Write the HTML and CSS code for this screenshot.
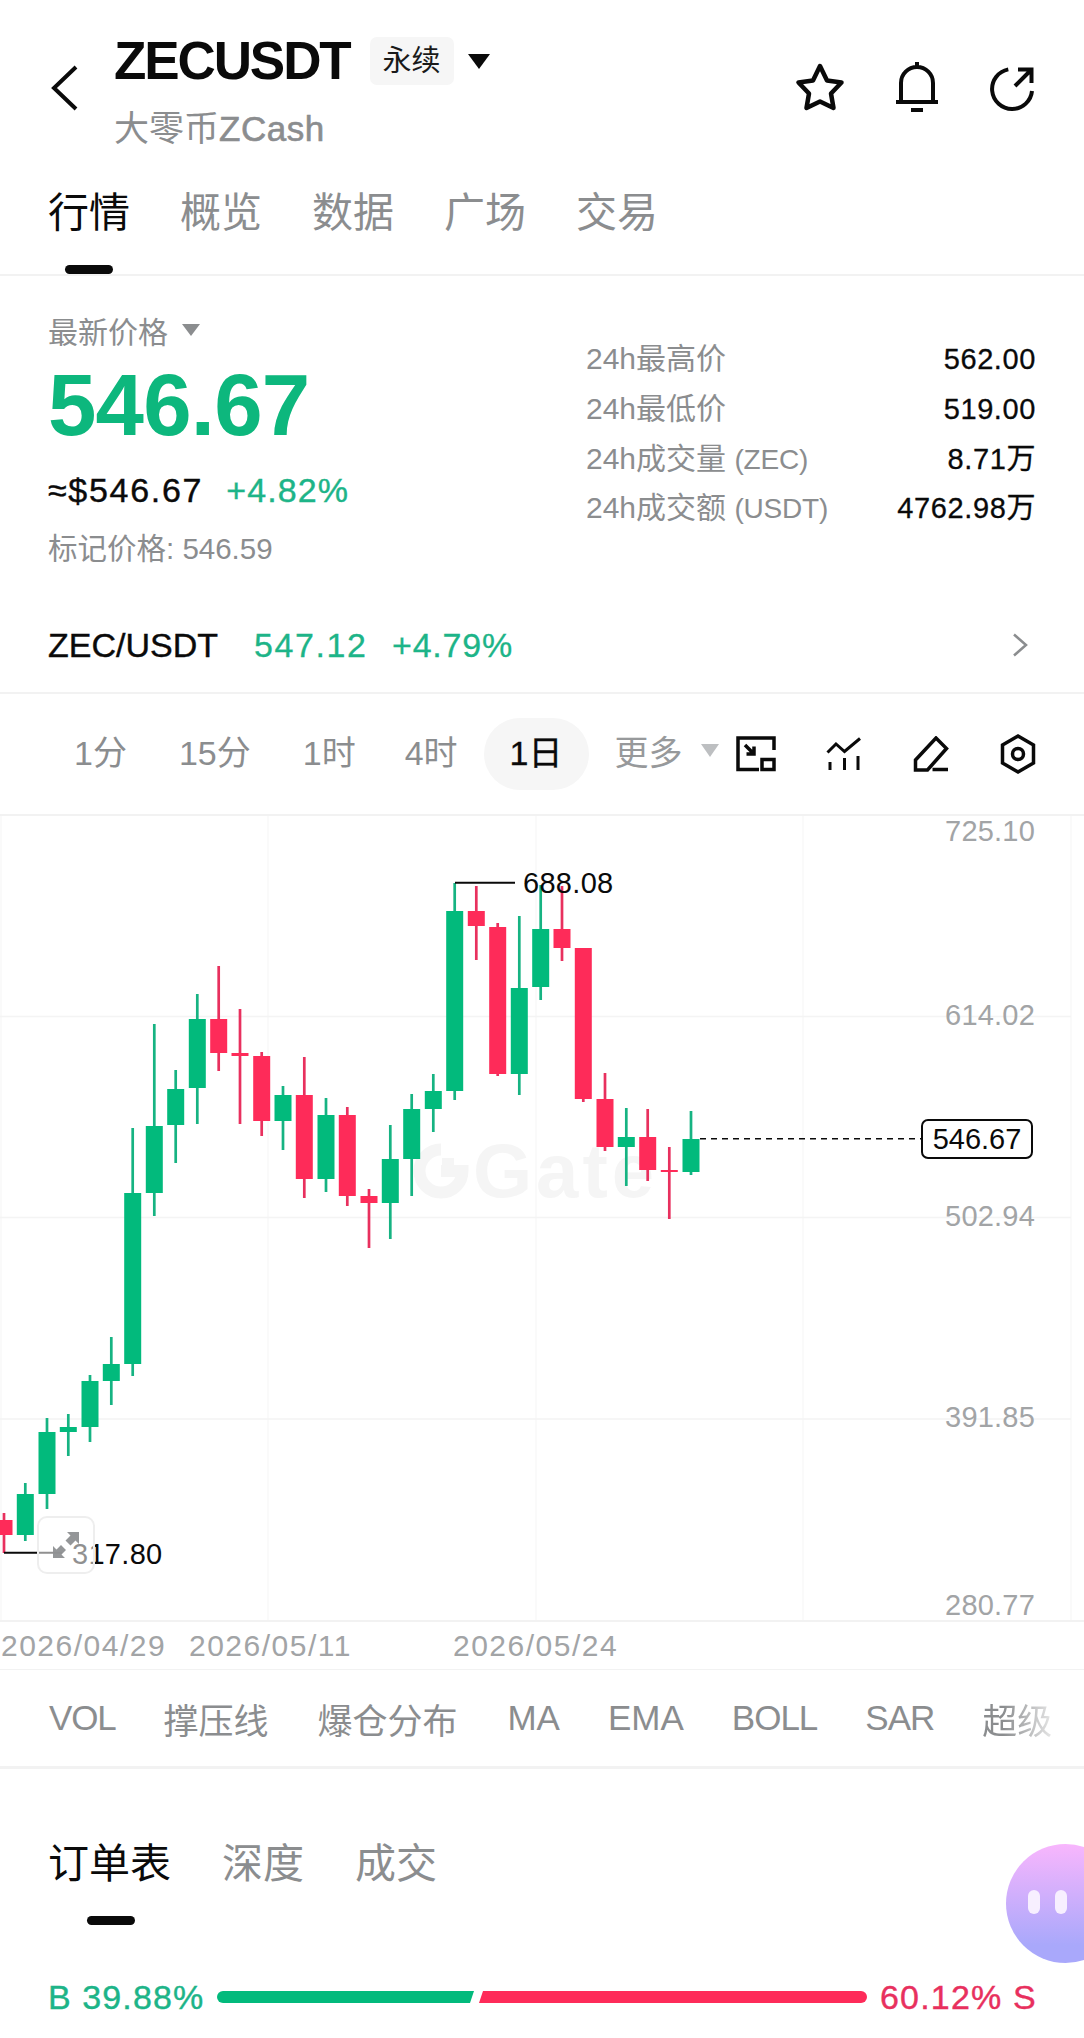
FILE: index.html
```html
<!DOCTYPE html>
<html lang="zh-CN">
<head>
<meta charset="utf-8">
<title>ZECUSDT</title>
<link rel="stylesheet" href="styles.css">
</head>
<body>
<div class="page">
  <header class="topbar">
    <svg class="back" viewBox="0 0 30 48"><path d="M26 3 4 24l22 21"/></svg>
    <div class="pair">
      <div class="title-row">
        <h1 class="title">ZECUSDT</h1>
        <span class="badge">永续</span>
        <i class="caret caret-dark"></i>
      </div>
      <div class="subtitle">大零币<span class="subtitle-latin">ZCash</span></div>
    </div>
    <div class="top-icons">
      <svg class="ic ic-star" viewBox="0 0 52 52"><path d="M26 5 33 19.500 47.500 21.500 37 32.500 39.500 47 26 40.500 12.500 47 15 32.500 4.500 21.500 19 19.500Z"/></svg>
      <svg class="ic ic-bell" viewBox="0 0 44 52"><path d="M6 41V22a16 16 0 0 1 32 0V41M22 1V6M1 41H43M16 49H28"/></svg>
      <svg class="ic ic-share" viewBox="0 0 48 48"><path d="M20.300 4.400A20 20 0 1 0 44 26M27 21 43.500 4.500M30 4.500H43.500V18"/></svg>
    </div>
  </header>

  <nav class="tabs main-tabs">
    <a class="tab active">行情<b class="bar-mark"></b></a>
    <a class="tab">概览</a>
    <a class="tab">数据</a>
    <a class="tab">广场</a>
    <a class="tab">交易</a>
  </nav>

  <section class="summary">
    <div class="summary-left">
      <div class="last-label">最新价格<i class="caret caret-gray"></i></div>
      <div class="last-price">546.67</div>
      <div class="fiat-row"><span class="fiat">≈$546.67</span><span class="pct">+4.82%</span></div>
      <div class="mark">标记价格: 546.59</div>
    </div>
    <dl class="stats">
      <div class="stat"><dt>24h最高价</dt><dd>562.00</dd></div>
      <div class="stat"><dt>24h最低价</dt><dd>519.00</dd></div>
      <div class="stat"><dt>24h成交量 <span class="unit">(ZEC)</span></dt><dd>8.71万</dd></div>
      <div class="stat"><dt>24h成交额 <span class="unit">(USDT)</span></dt><dd>4762.98万</dd></div>
    </dl>
  </section>

  <div class="spot">
    <span class="spot-name">ZEC/USDT</span>
    <span class="spot-price">547.12</span>
    <span class="spot-pct">+4.79%</span>
    <svg class="spot-chevron" viewBox="0 0 16 24"><path d="M2 1.500 14 12 2 22.500"/></svg>
  </div>

  <div class="toolbar">
    <a class="range">1分</a>
    <a class="range">15分</a>
    <a class="range range-tight">1时</a>
    <a class="range">4时</a>
    <a class="range selected">1日</a>
    <a class="range more">更多<i class="caret caret-fade"></i></a>
    <div class="tool-icons">
      <svg class="tool t-expand" viewBox="0 0 40 36"><path d="M23 33.500H2V2H38V14M26 23.500H38V33.500H26ZM9 9 18 18M18 10.500V18H10.500"/></svg>
      <svg class="tool t-ind" viewBox="0 0 36 36"><path d="M1.500 16.500 10 8 18.500 15.500 34 2.500M4 26V34M18.500 22V34M32 20V34"/></svg>
      <svg class="tool t-pen" viewBox="0 0 38 36"><path d="M4.500 34V24L25 2 35.500 12.500 16.500 34ZM21.500 33.500H37"/></svg>
      <svg class="tool t-hex" viewBox="0 0 38 42"><path d="M19 3 34.500 12V30L19 39 3.500 30V12Z"/><circle cx="19" cy="21" r="5.500"/></svg>
    </div>
  </div>

  <div class="chart">
    <div class="wm"><svg class="wm-logo" viewBox="0 0 56 56"><path d="M28 6.500A21.500 21.500 0 1 0 49.500 28H28"/><rect x="29" y="15" width="12" height="12"/></svg><span class="wm-text">Gate</span></div>
    <svg class="plot" viewBox="0 816 1084 804">
      <path class="grid-v" d="M1 816V1620M268 816V1620M536 816V1620M803 816V1620M1071 816V1620"/>
      <path class="grid-h" d="M0 1016.500H1071M0 1217.500H1071M0 1419H1071"/>
      <path class="wick up" d="M25.300 1483V1541M47 1418V1509M68.300 1414V1456M90 1375V1442M111.300 1337V1405M132.700 1128V1376M154.300 1024V1216M175.700 1070V1163M197.300 994V1124M283 1086V1150M326 1098V1192M390.300 1125V1239M411.700 1094V1196M433.300 1074V1132M454.700 883V1100M519.300 916V1095M540.700 885V1000M626.300 1108V1186M691 1111V1175"/>
      <path class="wick down" d="M4 1513V1553M218.700 966V1071M240 1009V1124M261.700 1052V1136M304.300 1057V1198M347.300 1107V1206M369 1189V1248M476.300 886V960M497.700 923V1076M562 886V961M583.300 948V1102M605 1073V1151M647.700 1109V1181M669.300 1147V1219"/>
      <path class="body up" d="M16.800 1494h17v41h-17zM38.500 1432h17v62h-17zM59.800 1427h17v5h-17zM81.500 1381h17v46h-17zM102.800 1364h17v17h-17zM124.200 1193h17v171h-17zM145.800 1126h17v67h-17zM167.200 1089h17v36h-17zM188.800 1019h17v69h-17zM274.500 1095h17v26h-17zM317.500 1115h17v64h-17zM381.800 1159h17v44h-17zM403.200 1109h17v50h-17zM424.800 1091h17v18h-17zM446.200 911h17v180h-17zM510.800 988h17v86h-17zM532.200 929h17v58h-17zM617.800 1137h17v10h-17zM682.500 1139h17v33h-17z"/>
      <path class="body down" d="M-4.500 1520h17v15h-17zM210.200 1019h17v34h-17zM231.500 1053h17v3h-17zM253.200 1056h17v65h-17zM295.800 1095h17v84h-17zM338.800 1115h17v81h-17zM360.500 1196h17v7h-17zM467.800 911h17v15h-17zM489.200 927h17v147h-17zM553.500 929h17v19h-17zM574.800 948h17v151h-17zM596.500 1099h17v48h-17zM639.200 1137h17v33h-17zM660.800 1170h17v2h-17z"/>
      <path class="guide" d="M455 882.700H515M4 1552.700H62"/>
      <path class="dash" d="M700 1138.700H921"/>
    </svg>
    <span class="axis a1">725.10</span>
    <span class="axis a2">614.02</span>
    <span class="axis a3">502.94</span>
    <span class="axis a4">391.85</span>
    <span class="axis a5">280.77</span>
    <span class="note note-high">688.08</span>
    <span class="note note-low">317.80</span>
    <span class="tag">546.67</span>
    <div class="fit"><svg class="fit-ic" viewBox="0 0 30 30"><path d="M16 2H28V14L24.500 10.500 19.500 15.500 14.500 10.500 19.500 5.500ZM14 28H2V16L5.500 19.500 10 15 15 20 10.500 24.500Z"/></svg></div>
  </div>

  <div class="dates">
    <span class="date d1">2026/04/29</span>
    <span class="date d2">2026/05/11</span>
    <span class="date d3">2026/05/24</span>
  </div>

  <div class="indicators">
    <a class="ind-vol">VOL</a><a>撑压线</a><a class="ind-liq">爆仓分布</a><a class="ind-ma">MA</a><a>EMA</a><a class="ind-boll">BOLL</a><a class="ind-sar">SAR</a><a class="fade-out">超级</a>
  </div>

  <nav class="tabs book-tabs">
    <a class="tab active">订单表<b class="bar-mark"></b></a>
    <a class="tab">深度</a>
    <a class="tab">成交</a>
  </nav>

  <div class="ratio">
    <span class="ratio-b">B 39.88%</span>
    <div class="ratio-bar"><i class="seg-b"></i><i class="seg-s"></i></div>
    <span class="ratio-s">60.12% S</span>
  </div>

  <div class="mascot"><i></i><i></i></div>
</div>
</body>
</html>
```
FILE: styles.css
```css
* { box-sizing: border-box; }
html, body { margin: 0; padding: 0; background: #fff; }
body {
  width: 1084px;
  height: 2038px;
  overflow: hidden;
  font-family: "Liberation Sans", "Noto Sans CJK SC", sans-serif;
  color: #0a0a0a;
}
.page { position: relative; width: 1084px; height: 2038px; overflow: hidden; }
a { display: block; }
i { display: block; font-style: normal; }

.caret { width: 0; height: 0; border-style: solid; border-color: transparent; border-bottom-width: 0; }
.caret-dark { margin-left: 14px; border-width: 15px 11px 0; border-top-color: #0a0a0a; }
.caret-gray { margin-left: 14px; border-width: 12px 9px 0; border-top-color: #8b8d8f; }
.caret-fade { margin-left: 18px; border-width: 13px 9px 0; border-top-color: #bdbfc1; }

/* header */
.topbar { display: flex; height: 165px; padding: 0 48px 0 50px; }
.back { width: 30px; height: 48px; margin: 64px 34px 0 0; flex: none; fill: none; stroke: #0a0a0a; stroke-width: 4; }
.pair { padding-top: 31px; }
.title-row { display: flex; align-items: center; height: 60px; }
.title { margin: 0 20px 0 0; font-size: 53px; line-height: 60px; font-weight: 700; letter-spacing: -2.100px; }
.badge { width: 84px; height: 48px; background: #f6f6f6; border-radius: 7px; font-size: 29px; line-height: 48px; text-align: center; color: #1a1a1a; }
.subtitle { margin-top: 17px; font-size: 35px; line-height: 42px; color: #8b8d8f; }
.subtitle-latin { -webkit-text-stroke: 0.600px #8b8d8f; letter-spacing: 0.500px; }
.top-icons { margin-left: auto; display: flex; align-items: flex-start; padding-top: 61px; }
.ic { flex: none; fill: none; stroke: #0a0a0a; stroke-width: 4.500; stroke-linejoin: round; }
.ic-star { width: 52px; height: 52px; margin-right: 49px; }
.ic-bell { width: 44px; height: 52px; margin-right: 49px; stroke-width: 4; stroke-linejoin: miter; }
.ic-share { width: 48px; height: 48px; margin-top: 4px; stroke-width: 4; stroke-linejoin: miter; }

/* tabs */
.tabs { display: flex; padding-left: 48px; }
.main-tabs { gap: 50px; height: 111px; border-bottom: 2px solid #f2f2f2; padding-top: 24px; }
.book-tabs { gap: 51px; height: 156px; padding-top: 71px; }
.tab { position: relative; font-size: 41px; line-height: 48px; color: #8b8d8f; }
.tab.active { color: #0a0a0a; }
.bar-mark { display: block; width: 48px; height: 9px; margin: 28px auto 0; border-radius: 5px; background: #0a0a0a; }
.book-tabs .bar-mark { margin-left: 39px; }

/* summary */
.summary { display: flex; justify-content: space-between; height: 322px; padding: 0 48px 0 48px; }
.summary-left { padding-top: 34px; }
.last-label { display: flex; align-items: center; height: 40px; font-size: 30px; color: #8b8d8f; }
.last-price { margin-top: 5px; font-size: 87px; line-height: 100px; font-weight: 700; letter-spacing: -0.800px; color: #0db77d; }
.fiat-row { display: flex; margin-top: 15px; font-size: 34px; line-height: 40px; letter-spacing: 1.700px; }
.fiat { margin-right: 23px; -webkit-text-stroke: 0.400px #0a0a0a; }
.pct { color: #1db488; letter-spacing: 1.100px; -webkit-text-stroke: 0.400px #1db488; }
.mark { margin-top: 19px; font-size: 29.500px; line-height: 40px; color: #8b8d8f; }
.stats { margin: 0; padding-top: 58px; width: 449px; }
.stat { display: flex; justify-content: space-between; height: 49.800px; line-height: 50px; font-size: 30px; }
.stat dt { color: #8b8d8f; margin-left: -1px; }
.unit { font-size: 28px; letter-spacing: -0.200px; }
.stat dd { margin: 0; font-size: 29px; letter-spacing: 0.600px; -webkit-text-stroke: 0.300px #0a0a0a; }

/* spot row */
.spot { position: relative; display: flex; align-items: center; height: 96px; padding: 0 56px 0 48px; border-bottom: 2px solid #f2f2f2; font-size: 34px; }
.spot-name { width: 206px; -webkit-text-stroke: 0.400px #0a0a0a; }
.spot-price { width: 138px; color: #1db488; letter-spacing: 1.600px; -webkit-text-stroke: 0.300px #1db488; }
.spot-pct { color: #1db488; letter-spacing: 0.800px; -webkit-text-stroke: 0.300px #1db488; }
.spot-chevron { width: 16px; height: 24px; margin-left: auto; fill: none; stroke: #8b8d8f; stroke-width: 2.500; }

/* toolbar */
.toolbar { display: flex; align-items: center; height: 122px; padding: 0 49px 0 48px; border-bottom: 2px solid #f2f2f2; }
.range { display: flex; align-items: center; height: 72px; padding: 0 26px 8px; border-radius: 36px; font-size: 34px; color: #8b8d8f; }
.range-tight { margin-right: -3px; }
.range.selected { color: #0a0a0a; background: #f6f6f6; -webkit-text-stroke: 0.300px #0a0a0a; }
.range.more { padding-right: 0; color: #97999b; }
.tool-icons { margin-left: auto; display: flex; align-items: center; }
.tool { flex: none; fill: none; stroke: #0a0a0a; stroke-width: 3.500; }
.t-expand { width: 40px; height: 36px; margin-right: 50px; }
.t-ind { width: 36px; height: 36px; margin-right: 49px; stroke-width: 3; }
.t-pen { width: 38px; height: 36px; margin-right: 50px; }
.t-hex { width: 38px; height: 42px; margin-right: -2px; stroke-width: 3.500; }

/* chart */
.chart { position: relative; height: 804px; }
.plot { position: absolute; left: 0; top: 0; width: 1084px; height: 804px; overflow: visible; }
.grid-v { fill: none; stroke: #f9f9f9; stroke-width: 1.500; }
.grid-h { fill: none; stroke: #f4f4f4; stroke-width: 1.500; }
.wick { fill: none; stroke-width: 2.700; }
.wick.up { stroke: #16b382; }
.wick.down { stroke: #e8305e; }
.body.up { fill: #02ba7c; }
.body.down { fill: #fe2b59; }
.guide { fill: none; stroke: #0a0a0a; stroke-width: 2; }
.dash { fill: none; stroke: #0a0a0a; stroke-width: 1.500; stroke-dasharray: 6 5; }
.wm { position: absolute; left: 413px; top: 325px; display: flex; align-items: center; gap: 4px; color: #f5f5f5; }
.wm-logo { width: 56px; height: 56px; fill: none; stroke: #f5f5f5; stroke-width: 12; }
.wm-logo rect { fill: #f5f5f5; stroke: none; }
.wm-text { font-size: 76px; line-height: 60px; font-weight: 700; letter-spacing: 4px; }
.axis { position: absolute; right: 49px; font-size: 29px; line-height: 32px; color: #a2a4a6; letter-spacing: 0.200px; }
.a1 { top: -1px; }
.a2 { top: 183px; }
.a3 { top: 384px; }
.a4 { top: 585px; }
.a5 { top: 773px; }
.note { position: absolute; font-size: 29px; line-height: 32px; letter-spacing: 0.300px; }
.note-high { left: 523px; top: 51px; }
.note-low { left: 72px; top: 722px; }
.tag { position: absolute; left: 921px; top: 303px; width: 112px; height: 40px; border: 2px solid #0a0a0a; border-radius: 7px; background: #fff; font-size: 29px; line-height: 36px; text-align: center; }
.fit { position: absolute; left: 37px; top: 700px; display: flex; align-items: center; justify-content: center; width: 58px; height: 58px; border: 2px solid #eeeeee; border-radius: 10px; background: rgba(255, 255, 255, 0.55); }
.fit-ic { width: 30px; height: 30px; fill: #8f9193; opacity: 0.950; }

/* dates */
.dates { display: flex; height: 50px; padding-left: 1px; border-top: 2px solid #f2f2f2; border-bottom: 1px solid #f2f2f2; font-size: 30px; line-height: 47px; color: #a2a4a6; letter-spacing: 1.500px; white-space: nowrap; }
.date { width: 162px; }
.d2 { margin-left: 26px; }
.d3 { margin-left: 102px; }

/* indicators */
.indicators { display: flex; align-items: center; gap: 48px; height: 99px; padding-left: 49px; border-bottom: 3px solid #f2f2f2; font-size: 35px; color: #8b8d8f; white-space: nowrap; overflow: hidden; }
.ind-vol { letter-spacing: -1.200px; }
.ind-liq { margin-left: 1px; }
.ind-ma { margin-left: 2px; }
.ind-boll { letter-spacing: -1px; }
.ind-sar { letter-spacing: -1px; }
.fade-out { background: linear-gradient(90deg, #8b8d8f 30%, #e6e6e6 100%); -webkit-background-clip: text; background-clip: text; color: transparent; }

/* ratio */
.ratio { display: flex; align-items: center; height: 48px; margin-top: 48px; padding: 0 47px 0 48px; font-size: 34px; }
.ratio-b { width: 169px; color: #1db488; white-space: nowrap; letter-spacing: 1.100px; -webkit-text-stroke: 0.400px #1db488; }
.ratio-s { margin-left: auto; color: #e8305e; white-space: nowrap; letter-spacing: 1.200px; -webkit-text-stroke: 0.400px #e8305e; }
.ratio-bar { display: flex; width: 650px; height: 12px; }
.seg-b { width: 257px; height: 12px; border-radius: 6px 0 0 6px; background: #02ba7c; clip-path: polygon(0 0, 100% 0, calc(100% - 4px) 100%, 0 100%); }
.seg-s { width: 388px; height: 12px; margin-left: 5px; border-radius: 0 6px 6px 0; background: #fe2b59; clip-path: polygon(4px 0, 100% 0, 100% 100%, 0 100%); }

/* floating mascot */
.mascot { position: absolute; left: 1006px; top: 1844px; display: flex; gap: 15px; padding: 46px 0 0 22px; width: 119px; height: 119px; border-radius: 50%; background: linear-gradient(180deg, #f8b6fd 0%, #a9a8fb 85%); }
.mascot i { width: 12px; height: 24px; border-radius: 6px; background: #f7efff; }
```
